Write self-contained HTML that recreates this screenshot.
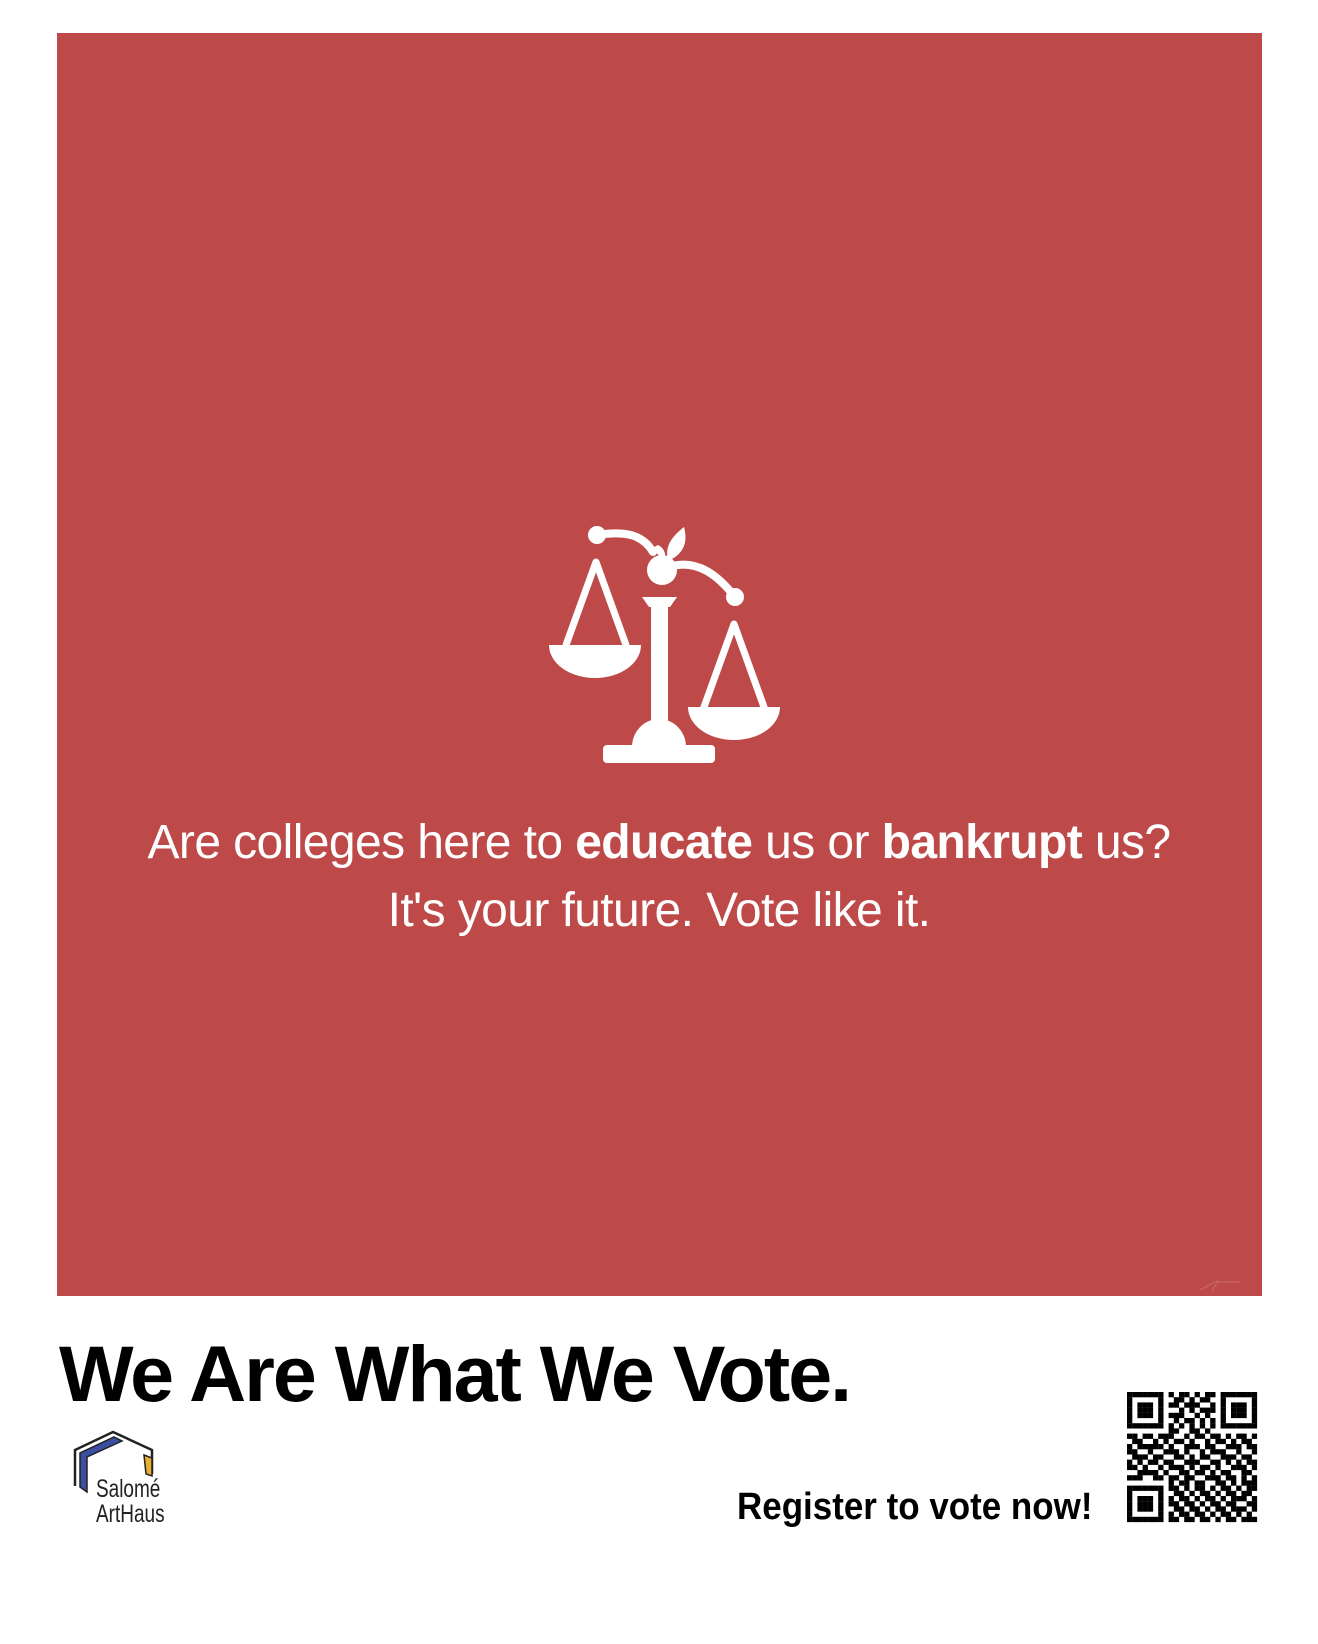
<!DOCTYPE html>
<html><head><meta charset="utf-8"><style>
body{margin:0;width:1318px;height:1644px;background:#fff;position:relative;overflow:hidden;font-family:"Liberation Sans",sans-serif}
.red{position:absolute;left:57px;top:33px;width:1205px;height:1263px;background:#BD4A49}
.t{position:absolute;left:0;width:1318px;text-align:center;color:#fff;font-size:48px;white-space:nowrap;font-weight:300;letter-spacing:-0.6px}
.t b{font-weight:700}
.h{position:absolute;left:59px;top:1334px;font-size:79px;font-weight:700;letter-spacing:-2px;line-height:1;white-space:nowrap;color:#000}
.reg{position:absolute;left:737px;top:1488px;font-size:38px;font-weight:700;white-space:nowrap;transform:scaleX(.92);transform-origin:left top;line-height:1;color:#000}
</style></head><body>
<div class="red"></div>
<svg style="position:absolute;left:0;top:0" width="1318" height="1644" viewBox="0 0 1318 1644">
<g fill="#fff" stroke="#fff" stroke-linecap="round" stroke-linejoin="round">
<path d="M597,535 C622,531 642,533 653,552" fill="none" stroke-width="8"/>
<path d="M672,566 C697,560 717,574 735,597" fill="none" stroke-width="8"/>
<circle cx="597" cy="535" r="9" stroke="none"/>
<circle cx="735" cy="597" r="9" stroke="none"/>
<circle cx="662" cy="570" r="15" stroke="none"/>
<path d="M668,560 C664,545 674,535 684,527 C688,542 684,553 670,560 Z" stroke="none"/>
<path d="M664,561 C656,552 650,548 658,545 C664,548 667,554 664,561 Z" stroke="none"/>
<path d="M566,645 L596,562 L626,645" fill="none" stroke-width="7"/>
<path d="M549,645 L641,645 A46,33 0 0 1 549,645 Z" stroke="none"/>
<path d="M704,707 L734,624 L764,707" fill="none" stroke-width="7"/>
<path d="M688,707 L780,707 A46,33 0 0 1 688,707 Z" stroke="none"/>
<path d="M642,597 L677,597 L670,607 L649,607 Z" stroke="none"/>
<rect x="651" y="600" width="17" height="130" stroke="none"/>
<path d="M632,747 A27,28 0 0 1 686,747 Z" stroke="none"/>
<rect x="603" y="745" width="112" height="18" rx="4" stroke="none"/>
</g>
<path d="M1200,1290 L1215,1282 L1240,1282 M1212,1292 L1218,1280" stroke="#c86a69" stroke-width="1" fill="none"/>
<!-- logo -->
<path d="M75,1486 L75,1450 L113,1432 L152,1450 L152,1474" fill="none" stroke="#222" stroke-width="2.5"/>
<path d="M80,1487 L80,1453 L114,1437 L122,1441 L87,1457 L87,1492 Z" fill="#3a4fa0" stroke="#222" stroke-width="1.5"/>
<path d="M144,1455 L152,1458 L152,1476 L146,1474 Z" fill="#e8b030" stroke="#222" stroke-width="1.5"/>
<text x="96" y="1497" font-family="Liberation Sans,sans-serif" font-size="25" fill="#222" transform="translate(96,0) scale(.76,1) translate(-96,0)">Salomé</text>
<text x="96" y="1522" font-family="Liberation Sans,sans-serif" font-size="25" fill="#222" transform="translate(96,0) scale(.76,1) translate(-96,0)">ArtHaus</text>
<g id="qr" transform="translate(1127,1392) scale(5.2)" fill="#000"></g>
</svg>
<div class="t" style="top:815px">Are <span style="font-weight:400">colleges</span> here to <b>educate</b> us or <b>bankrupt</b> us?</div>
<div class="t" style="top:883px">It's your future. <span style="font-weight:400">Vote</span> like it.</div>
<div class="h">We Are What We Vote.</div>
<div class="reg">Register to vote now!</div>
<script>
var rows=["1111111010110101101111111","1000001001101011001000001","1011101011011100101011101","1011101000101011101011101","1011101011100101001011101","1000001001011010101000001","1111111010101010101111111","0000000011001101000000000",
"1101101110010110110101101","0110010101101001011010110","1011111010011101100111011","1100100111010010111001001","0111011001101011001110110","1010110110011100110101011","1101001011101011010011101","0011110100110110101100110","1110011011011001110110101","0000000010110110011010111",
"1111111011010110101101011","1000001001101011010110110","1011101010110101101011101","1011101011011010110110011","1011101001101101011011101","1000001010110110101101010","1111111011011011010110111"];
var g=document.getElementById('qr'),s='';
for(var y=0;y<25;y++)for(var x=0;x<25;x++)if(rows[y][x]=='1')s+='<rect x="'+x+'" y="'+y+'" width="1.02" height="1.02"/>';
g.innerHTML=s;
</script>
</body></html>
